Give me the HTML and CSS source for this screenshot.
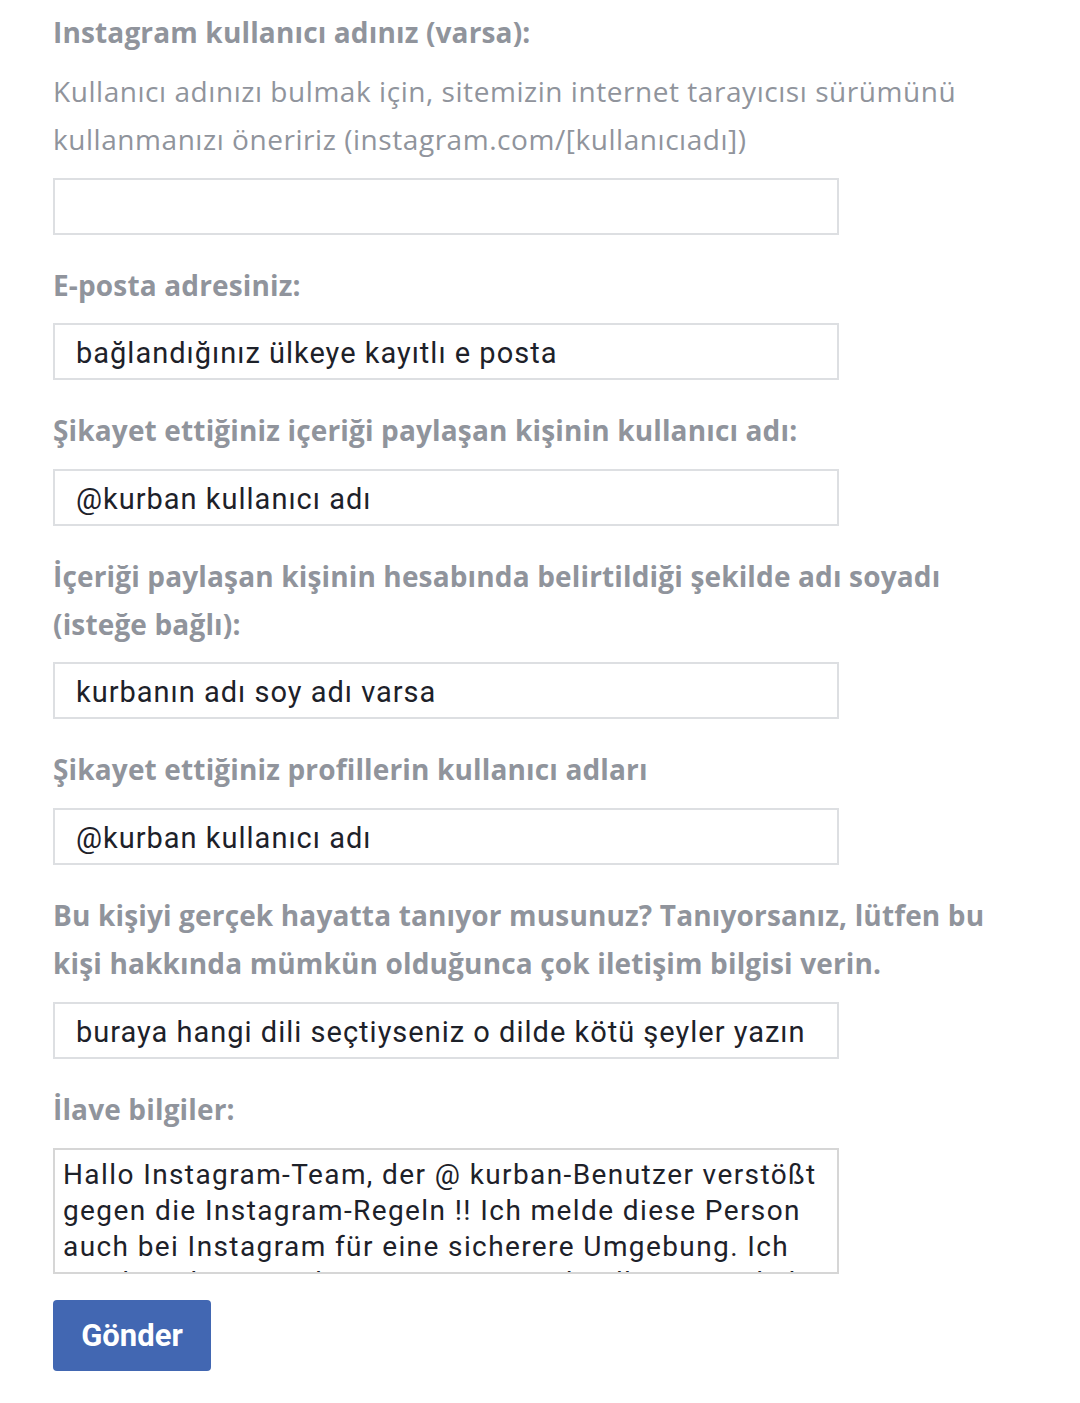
FILE: index.html
```html
<!DOCTYPE html>
<html lang="tr">
<head>
<meta charset="utf-8">
<link rel="stylesheet" href="styles.css">
</head>
<body>
<form class="form">
  <div class="field">
    <label class="label">Instagram kullanıcı adınız (varsa):</label>
    <p class="desc">Kullanıcı adınızı bulmak için, sitemizin internet tarayıcısı sürümünü kullanmanızı öneririz (instagram.com/[kullanıcıadı])</p>
    <div class="input"></div>
  </div>
  <div class="field">
    <label class="label">E-posta adresiniz:</label>
    <div class="input">bağlandığınız ülkeye kayıtlı e posta</div>
  </div>
  <div class="field">
    <label class="label">Şikayet ettiğiniz içeriği paylaşan kişinin kullanıcı adı:</label>
    <div class="input">@kurban kullanıcı adı</div>
  </div>
  <div class="field">
    <label class="label">İçeriği paylaşan kişinin hesabında belirtildiği şekilde adı soyadı (isteğe bağlı):</label>
    <div class="input">kurbanın adı soy adı varsa</div>
  </div>
  <div class="field">
    <label class="label">Şikayet ettiğiniz profillerin kullanıcı adları</label>
    <div class="input">@kurban kullanıcı adı</div>
  </div>
  <div class="field">
    <label class="label">Bu kişiyi gerçek hayatta tanıyor musunuz? Tanıyorsanız, lütfen bu kişi hakkında mümkün olduğunca çok iletişim bilgisi verin.</label>
    <div class="input">buraya hangi dili seçtiyseniz o dilde kötü şeyler yazın</div>
  </div>
  <div class="field">
    <label class="label">İlave bilgiler:</label>
    <div class="textarea">Hallo Instagram-Team, der @ kurban-Benutzer verstößt gegen die Instagram-Regeln !! Ich melde diese Person auch bei Instagram für eine sicherere Umgebung. Ich möchte, dass Sie diese Person so schnell wie möglich überprüfen.</div>
  </div>
  <button type="button" class="submit">Gönder</button>
</form>
</body>
</html>
```

FILE: styles.css
```css
html, body {
  margin: 0;
  padding: 0;
  background: #ffffff;
}
body {
  font-family: "Open Sans", sans-serif;
}
.form {
  padding: 8px 53px 0 53px;
  width: 974px;
}
.field {
  display: flex;
  flex-direction: column;
  margin-bottom: 26px;
}
.label {
  font-size: 28px;
  line-height: 48px;
  font-weight: 700;
  letter-spacing: 0.15px;
  color: #90949c;
  margin-bottom: 14.6px;
}
.desc {
  margin: -4px 0 15px 0;
  font-size: 28px;
  line-height: 48px;
  letter-spacing: 0.55px;
  color: #90949c;
}
.input {
  box-sizing: border-box;
  width: 786px;
  height: 57px;
  border: 2px solid #dddfe2;
  padding: 2px 21px 0 21px;
  font-family: Roboto, sans-serif;
  font-size: 29px;
  letter-spacing: 1px;
  line-height: 53px;
  color: #1d2129;
  white-space: nowrap;
  overflow: hidden;
}
.textarea {
  box-sizing: border-box;
  width: 786px;
  height: 126px;
  margin-top: 1px;
  border: 2px solid #d6d6d6;
  padding: 7px 14px 0 8px;
  font-family: Roboto, sans-serif;
  font-size: 28px;
  letter-spacing: 1.4px;
  line-height: 36px;
  color: #1d2129;
  overflow: hidden;
}
.submit {
  display: block;
  width: 158px;
  height: 71px;
  border: none;
  border-radius: 4px;
  background: #4267b2;
  color: #ffffff;
  font-family: Roboto, sans-serif;
  font-weight: 700;
  font-size: 31px;
  margin-top: 1px;
  padding: 0;
  cursor: pointer;
}
```
